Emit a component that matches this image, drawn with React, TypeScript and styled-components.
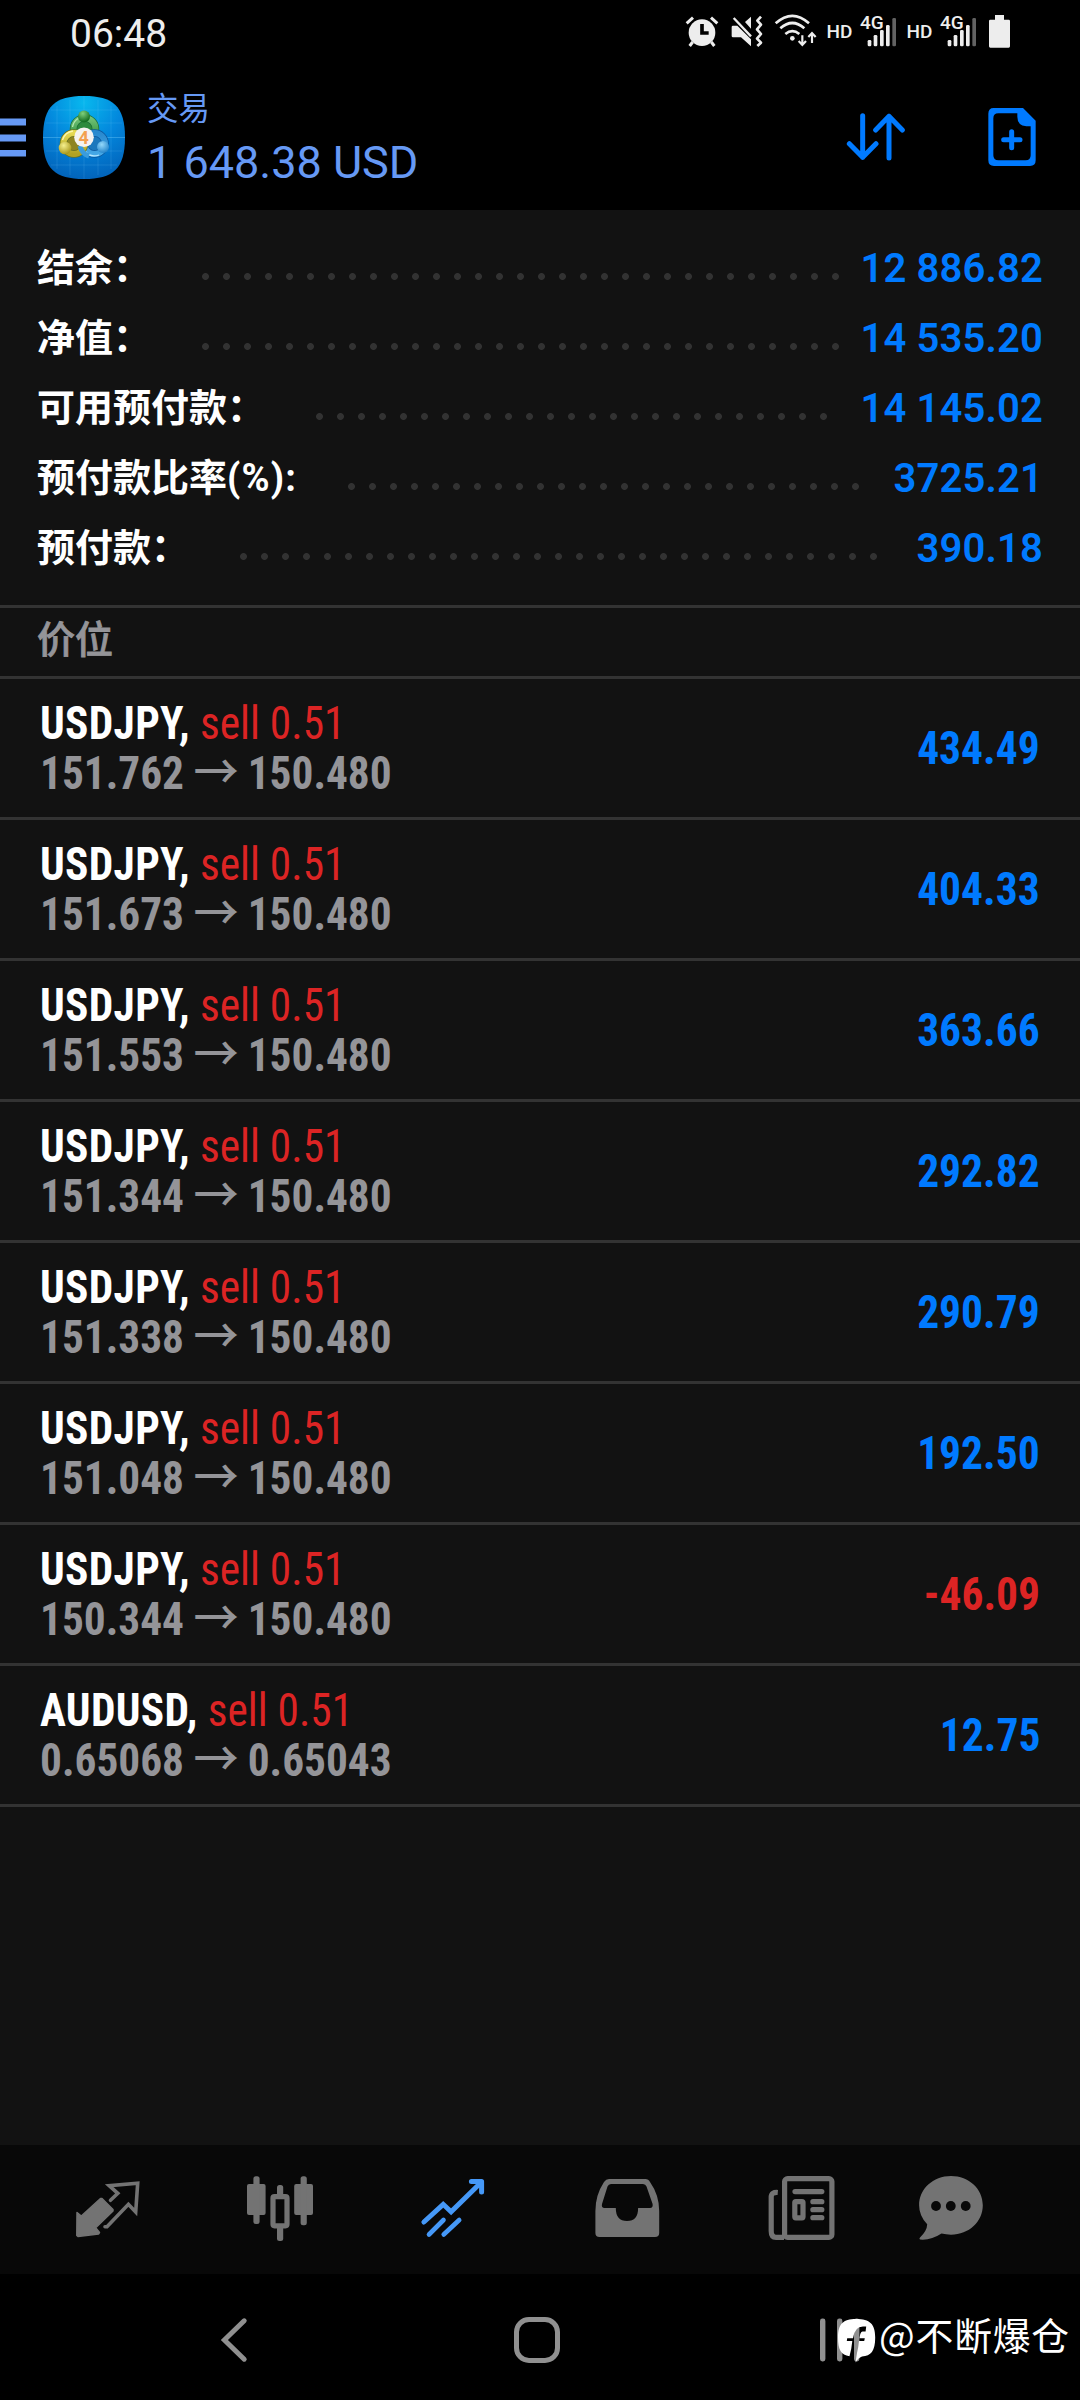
import React from 'react';
import styled, { createGlobalStyle } from 'styled-components';

const BLUE = '#007aff';
const RED = '#dc2424';
const MUTED = '#949498';
const TAB = '#737373';

const GlobalStyle = createGlobalStyle`
  html, body { margin: 0; padding: 0; background: #000; }
  * { box-sizing: border-box; }
  svg { display: block; flex: none; }
`;

const Screen = styled.div`
  position: relative;
  display: flex;
  flex-direction: column;
  width: 1080px;
  height: 2400px;
  overflow: hidden;
  background: #000;
  font-family: Roboto, 'Noto Sans CJK SC', sans-serif;
  white-space: nowrap;
`;

const StatusBar = styled.div`
  display: flex;
  align-items: center;
  height: 64px;
  padding: 0 67px 0 70px;
  color: #ededed;
`;

const Clock = styled.span`
  margin-right: auto;
  padding-top: 4px;
  font-size: 39px;
  line-height: 60px;
`;

const StatusIcons = styled.div`
  display: flex;
  align-items: center;
  gap: 8px;
`;

const HdLabel = styled.span`
  width: 27px;
  font-size: 19px;
  font-weight: 500;
  line-height: 40px;
  text-align: center;
`;

const SignalBox = styled.div`
  position: relative;
  width: 37px;
  height: 40px;
`;

const NetworkLabel = styled.span`
  position: absolute;
  left: -1px;
  top: 0;
  font-size: 19px;
  font-weight: 500;
  line-height: 22px;
`;

const AppBar = styled.header`
  display: flex;
  align-items: center;
  height: 146px;
  padding-right: 44px;
  color: #6699f5;
`;

const LogoWrap = styled.div`
  margin-left: 17px;
`;

const Titles = styled.div`
  display: flex;
  flex-direction: column;
  margin: 0 auto 3px 22px;
`;

const Title = styled.span`
  font-size: 31.5px;
  line-height: 54px;
`;

const Equity = styled.span`
  font-size: 45px;
  line-height: 52px;
`;

const Actions = styled.div`
  display: flex;
  align-items: center;
  gap: 82px;
`;

const Body = styled.main`
  height: 1935px;
  background: #121212;
`;

const Summary = styled.section`
  height: 395px;
  padding: 22px 37px 0;
`;

const SummaryRow = styled.div`
  display: flex;
  align-items: center;
  height: 70px;
`;

const SummaryLabel = styled.span`
  padding-top: 1px;
  color: #fff;
  font-size: 38px;
  font-weight: 700;
  line-height: 66px;
`;

const Unit = styled.span`
  letter-spacing: 1.2px;
`;

const Dots = styled.span<{ $count: number }>`
  width: ${(p) => p.$count * 21}px;
  height: 7px;
  margin: 18px 0 0 44px;
  background: radial-gradient(circle at center, #323232 3px, transparent 3.8px) 0 0 / 21px 7px repeat-x;
`;

const SummaryValue = styled.span`
  margin-left: auto;
  padding-top: 3px;
  color: ${BLUE};
  font-size: 40px;
  font-weight: 650;
  letter-spacing: 0.15px;
  line-height: 66px;
`;

const SectionHeading = styled.h2`
  height: 74px;
  margin: 0;
  padding-left: 37px;
  border: solid #333;
  border-width: 3px 0;
  color: ${MUTED};
  font-size: 38px;
  font-weight: 500;
  line-height: 64px;
  -webkit-text-stroke: 0.8px ${MUTED};
`;

const PositionRow = styled.div`
  display: flex;
  align-items: center;
  justify-content: space-between;
  height: 141px;
  padding: 0 40px;
  border-bottom: 3px solid #333;
  font-family: 'Roboto Condensed', Roboto, sans-serif;
  font-stretch: 75%;
  font-size: 46px;
  line-height: 50px;
`;

const PositionInfo = styled.div`
  display: flex;
  flex-direction: column;
  transform: scaleX(0.942);
  transform-origin: left center;
`;

const Symbol = styled.span`
  color: #fff;
  font-weight: 700;
  letter-spacing: 0.35px;
`;

const Side = styled.span`
  color: ${RED};
  font-weight: 400;
`;

const Prices = styled.div`
  display: flex;
  height: 50px;
  color: ${MUTED};
  font-weight: 700;
`;

const Arrow = styled.span`
  margin: 0 9.6px 0 10px;
  font-family: 'Noto Sans CJK SC', sans-serif;
  font-size: 48px;
  font-weight: 500;
  line-height: 41px;
`;

const Profit = styled.span<{ $loss: boolean }>`
  color: ${(p) => (p.$loss ? RED : BLUE)};
  font-weight: 700;
  transform: scaleX(0.945);
  transform-origin: right center;
`;

const TabBar = styled.nav`
  display: grid;
  grid-template-columns: 172px 172px 174px 174px 176px 122px;
  align-items: center;
  justify-items: center;
  height: 129px;
  padding: 0 0 1px 22px;
  background: #080808;
`;

const SystemNav = styled.div`
  display: flex;
  align-items: center;
  height: 126px;
  padding: 5px 0 0 216px;
`;

const HomeKey = styled.div`
  width: 46px;
  height: 46px;
  margin: 0 260px 0 264px;
  border: 5px solid #909090;
  border-radius: 15px;
`;

const Watermark = styled.div`
  position: absolute;
  left: 837px;
  top: 2309px;
  display: flex;
  align-items: center;
  height: 60px;
  color: #fff;
  font-family: 'Noto Sans CJK SC', sans-serif;
  font-size: 37.8px;
  line-height: 54px;
`;

const Handle = styled.span`
  margin: -10px 0 0 3px;
  letter-spacing: 0.8px;
`;

const AlarmIcon = () => (
  <svg width="39" height="40" viewBox="69 36 117 120" fill="none">
    <circle cx="126" cy="98" r="40" fill="#ededed" />
    <path d="M80 70L99 53M172 70L153 53" stroke="#ededed" strokeWidth="9" />
    <path d="M98 126L89 138M154 126L163 138" stroke="#ededed" strokeWidth="9" />
    <path d="M126 72V99H146" stroke="#000" strokeWidth="11" />
  </svg>
);

const VibrateIcon = () => (
  <svg width="36" height="40" viewBox="210 36 108 120" fill="none">
    <path d="M219 77H232L273 118V139L243 112H219Q215 112 215 108V81Q215 77 219 77Z" fill="#ededed" />
    <path d="M255 66L273 50V86Z" fill="#ededed" />
    <path d="M221 54L273 109" stroke="#ededed" strokeWidth="7" />
    <path d="M303 50L292 62L303 74L291 88L303 102L291 116L303 128L292 138" stroke="#ededed" strokeWidth="8" strokeLinejoin="round" />
  </svg>
);

const WifiIcon = () => (
  <svg width="44" height="40" viewBox="342 36 132 120" fill="none" stroke="#ededed">
    <path d="M347 70Q397 25 447 70M361 85Q397 53 433 85M376 102Q397 85 418 102" strokeWidth="8" />
    <circle cx="397" cy="115" r="7" fill="#ededed" stroke="none" />
    <path d="M427 106V134M416 123L427 135L438 123M456 129V99M445 111L456 99L467 111" strokeWidth="6.5" />
  </svg>
);

const Signal = () => (
  <SignalBox>
    <svg width="37" height="40" viewBox="603 36 111 120">
      <g fill="#ededed">
        <rect x="623" y="120" width="11" height="19" rx="4" />
        <rect x="641" y="105" width="11" height="34" rx="4" />
        <rect x="660" y="90" width="11" height="49" rx="4" />
        <rect x="678" y="75" width="11" height="64" rx="4" />
      </g>
      <rect x="697" y="54" width="11" height="85" rx="4" fill="#626262" />
    </svg>
    <NetworkLabel>4G</NetworkLabel>
  </SignalBox>
);

const BatteryIcon = () => (
  <svg width="27" height="40" viewBox="978 36 81 120">
    <path d="M1005 45H1032V59H1046Q1050 59 1050 63V139Q1050 143 1046 143H991Q987 143 987 139V63Q987 59 991 59H1005Z" fill="#ededed" />
  </svg>
);

const MenuIcon = () => (
  <svg width="26" height="40" viewBox="0 0 26 40" fill="#6699f5">
    <rect x="0" y="1.5" width="26" height="7" />
    <rect x="0" y="17.5" width="26" height="7" />
    <rect x="0" y="33" width="26" height="6.5" />
  </svg>
);

const AppLogo = () => (
  <svg width="82" height="83" viewBox="0 0 82 83" fill="none">
    <defs>
      <radialGradient id="bg" cx="0.5" cy="0.08" r="0.95">
        <stop offset="0" stopColor="#08b8ee" />
        <stop offset="0.5" stopColor="#0386dc" />
        <stop offset="1" stopColor="#0262b9" />
      </radialGradient>
      <linearGradient id="green" x1="0" y1="0" x2="0" y2="1">
        <stop offset="0" stopColor="#72c276" />
        <stop offset="1" stopColor="#268a35" />
      </linearGradient>
      <linearGradient id="gold" x1="0" y1="0" x2="0" y2="1">
        <stop offset="0" stopColor="#e6da55" />
        <stop offset="1" stopColor="#b0a222" />
      </linearGradient>
      <linearGradient id="sky" x1="0" y1="0" x2="0" y2="1">
        <stop offset="0" stopColor="#2989cf" />
        <stop offset="1" stopColor="#45a8e6" />
      </linearGradient>
      <radialGradient id="greenBall" cx="0.4" cy="0.25" r="0.7">
        <stop offset="0" stopColor="#7fd07c" />
        <stop offset="1" stopColor="#146e22" />
      </radialGradient>
      <radialGradient id="goldBall" cx="0.4" cy="0.3" r="0.7">
        <stop offset="0" stopColor="#f6f08e" />
        <stop offset="1" stopColor="#a8981c" />
      </radialGradient>
      <radialGradient id="skyBall" cx="0.4" cy="0.3" r="0.7">
        <stop offset="0" stopColor="#94d8fa" />
        <stop offset="1" stopColor="#2687cc" />
      </radialGradient>
    </defs>
    <path d="M41 0C70 0 82 10 82 41.5S70 83 41 83S0 73 0 41.5S12 0 41 0Z" fill="url(#bg)" />
    <path d="M14 10V73M27 4V79M41 0V83M55 4V79M68 10V73M8 14H74M3 27H79M3 55H79M8 69H74" stroke="#8edcff" strokeOpacity="0.14" />
    <path d="M0 41.5H82" stroke="#7fd4ff" strokeOpacity="0.35" />
    <circle cx="41.5" cy="33" r="11" fill="#2c8a3c" stroke="#1c6d38" strokeWidth="7.5" />
    <circle cx="41.5" cy="33" r="11" stroke="url(#green)" strokeWidth="6" />
    <path d="M29.5 31A12 12 0 0 1 36 22" stroke="#b4e8b0" strokeWidth="1.3" />
    <circle cx="51.5" cy="47.5" r="10.5" fill="#1b78bd" stroke="#0b579e" strokeWidth="7.5" />
    <circle cx="51.5" cy="47.5" r="10.5" stroke="url(#sky)" strokeWidth="6" />
    <path d="M42 55Q47 62 56 59" stroke="#b8e8ff" strokeWidth="1.3" />
    <circle cx="31" cy="47.5" r="10.5" fill="#8e8420" stroke="#66701f" strokeWidth="7.5" />
    <circle cx="31" cy="47.5" r="10.5" stroke="url(#gold)" strokeWidth="6" />
    <path d="M19.5 44Q22 36 30 35" stroke="#fbf7b0" strokeWidth="1.3" />
    <path d="M37 50Q39 58 46 60" stroke="#3a9cdd" strokeWidth="5" />
    <circle cx="41" cy="20.5" r="6" fill="url(#greenBall)" />
    <circle cx="22" cy="52" r="6.3" fill="url(#goldBall)" />
    <circle cx="60" cy="51" r="6" fill="url(#skyBall)" />
    <circle cx="41" cy="41.2" r="9.8" fill="#f4f2f0" />
    <text x="40.6" y="47.6" textAnchor="middle" fontFamily="Roboto, sans-serif" fontSize="18" fontWeight="700" fill="#f3a050">4</text>
  </svg>
);

const SortIcon = () => (
  <svg width="60" height="60" viewBox="557 320 180 180" fill="none" stroke={BLUE} strokeWidth="15" strokeLinecap="round" strokeLinejoin="round">
    <path d="M607 346V471M567 430L607 471L647 430M686 473V348M646 389L686 348L726 389" />
  </svg>
);

const NewOrderIcon = () => (
  <svg width="48" height="60" viewBox="983 320 144 180">
    <path
      fillRule="evenodd"
      fill={BLUE}
      d="M1000 323H1088L1126 361V480Q1126 497 1109 497H1001Q984 497 984 480V340Q984 323 1000 323ZM1014 339Q999 339 999 354V465Q999 480 1014 480H1096Q1111 480 1111 465V378H1098Q1071 375 1071 349V339Z"
    />
    <path d="M1030 418H1079M1054 394V442" stroke={BLUE} strokeWidth="15" strokeLinecap="round" />
  </svg>
);

const TabIcon = ({ children }: { children: React.ReactNode }) => (
  <svg width="80" height="80" viewBox="0 0 80 80" fill="none">
    {children}
  </svg>
);

const QuotesIcon = () => (
  <TabIcon>
    <path d="M9 43.5L13.3 47L32.5 29.5L34 29.5L45 40.5V42L27.7 58.7L31.5 63.5L30.5 65L10 67.5L8.8 66.5Z" fill={TAB} stroke={TAB} strokeLinejoin="round" strokeWidth="1.5" />
    <path d="M42.5 31.3L49.8 24.3L41.2 16.7L69.7 14.2L67.7 43L60.4 35.3L39 57.7H37" stroke={TAB} strokeWidth="3.6" strokeLinecap="round" />
  </TabIcon>
);

const ChartsIcon = () => (
  <TabIcon>
    <g fill={TAB}>
      <rect x="7" y="15" width="18.6" height="31" rx="2" />
      <rect x="13.4" y="7.3" width="6.2" height="47.7" rx="2.5" />
      <rect x="54.2" y="15" width="18.8" height="31" rx="2" />
      <rect x="60.6" y="7.3" width="6.2" height="49" rx="2.5" />
      <rect x="37" y="16" width="6.2" height="11" rx="2.5" />
      <rect x="37" y="57" width="6.2" height="15" rx="2.5" />
    </g>
    <rect x="33" y="27.6" width="14" height="29.2" rx="1.5" stroke={TAB} strokeWidth="5.2" />
  </TabIcon>
);

const TradeIcon = () => (
  <TabIcon>
    <g stroke="#4598f7" strokeWidth="5" strokeLinecap="round">
      <path d="M10.9 53L30.2 35.3L38.1 42.7L68 13.5" />
      <path d="M58.4 12.6H68.6V23" strokeLinejoin="round" />
      <path d="M16 65.5L30.5 51M30.7 65.5L46.2 51" strokeWidth="4.6" />
    </g>
    <path d="M60 11H70V22Z" fill="#4598f7" />
  </TabIcon>
);

const HistoryIcon = () => (
  <TabIcon>
    <path
      fillRule="evenodd"
      fill={TAB}
      d="M22 10H58.5Q61.5 10 63 13Q72.2 26 72.2 42V64Q72.2 68 68 68H12.5Q8.4 68 8.4 64V42Q8.4 26 17 13Q19 10 22 10ZM24 15Q21.5 15 20.5 17.5L15 35Q14.2 39 17.5 39H28.8Q28.8 52 40 52T51.1 39H63Q66.2 39 65.6 35L59.5 17.5Q58.5 15 56 15Z"
    />
  </TabIcon>
);

const NewsIcon = () => (
  <TabIcon>
    <rect x="22.6" y="9.6" width="47.3" height="58.8" rx="3" stroke={TAB} strokeWidth="5.2" />
    <path d="M15.8 23.5Q9.2 23 9.2 28V62Q9.2 68.4 14 68.4H22" stroke={TAB} strokeWidth="5.2" />
    <g fill={TAB}>
      <rect x="30.4" y="20" width="32" height="5.2" rx="2.6" />
      <rect x="48.3" y="30" width="14.1" height="5.3" rx="2.6" />
      <rect x="48.3" y="38" width="14.1" height="5.3" rx="2.6" />
      <rect x="48.3" y="46" width="14.1" height="5.3" rx="2.6" />
    </g>
    <rect x="32.8" y="32.6" width="8.2" height="16.2" rx="1" stroke={TAB} strokeWidth="5.2" />
  </TabIcon>
);

const ChatIcon = () => (
  <TabIcon>
    <path
      fillRule="evenodd"
      fill={TAB}
      d="M40 7C58 7 71.8 20 71.8 36.3S58 65.7 40 65.7Q35 65.7 30.5 64.6Q20 71.5 9 70.5Q7.8 70 9 68.5Q16 62 16.2 55.3Q8.1 47 8.1 36.3C8.1 20 22 7 40 7Z"
    />
    <g fill="#080808">
      <circle cx="25" cy="37" r="4.9" />
      <circle cx="39.8" cy="37" r="4.9" />
      <circle cx="54.7" cy="37" r="4.9" />
    </g>
  </TabIcon>
);

const BackKey = () => (
  <svg width="34" height="46" viewBox="0 0 34 46" fill="none">
    <path d="M28.2 3.8L8.4 23L28.2 42.2" stroke="#909090" strokeWidth="5" strokeLinecap="round" />
  </svg>
);

const RecentsKey = () => (
  <svg width="40" height="46" viewBox="0 0 40 46" fill="#909090">
    <rect x="0" y="1.5" width="5.4" height="43" rx="2.4" />
    <rect x="17" y="1.5" width="5.4" height="43" rx="2.4" />
    <rect x="34" y="1.5" width="5.4" height="43" rx="2.4" />
  </svg>
);

const WatermarkLogo = () => (
  <svg width="39" height="48" viewBox="0 0 39 48">
    <path
      fillRule="evenodd"
      fill="#fff"
      d="M19 4C33 4 38.2 9 38.2 22.5C38.2 36 34 41 25 41.5Q21 43 18.5 47.5L20 38Q21.5 32 22 26H27.2L27.8 23.3H22.5Q23 17 25.5 16.6L28.6 16.5L29.2 11.5H26Q17.5 11.5 16 23.3H10.2L9.8 26H15.3Q14.6 34 12.5 41.2C4 40 1 35 1 22.5C1 9 6 4 19 4Z"
    />
  </svg>
);

const summary = [
  { label: '结余：', dots: 31, value: '12 886.82' },
  { label: '净值：', dots: 31, value: '14 535.20' },
  { label: '可用预付款：', dots: 25, value: '14 145.02' },
  { label: '预付款比率', unit: '(%):', dots: 25, value: '3725.21' },
  { label: '预付款：', dots: 31, value: '390.18' },
];

const positions = [
  { symbol: 'USDJPY', open: '151.762', current: '150.480', profit: '434.49' },
  { symbol: 'USDJPY', open: '151.673', current: '150.480', profit: '404.33' },
  { symbol: 'USDJPY', open: '151.553', current: '150.480', profit: '363.66' },
  { symbol: 'USDJPY', open: '151.344', current: '150.480', profit: '292.82' },
  { symbol: 'USDJPY', open: '151.338', current: '150.480', profit: '290.79' },
  { symbol: 'USDJPY', open: '151.048', current: '150.480', profit: '192.50' },
  { symbol: 'USDJPY', open: '150.344', current: '150.480', profit: '-46.09' },
  { symbol: 'AUDUSD', open: '0.65068', current: '0.65043', profit: '12.75' },
];

export default function App() {
  return (
    <>
      <GlobalStyle />
      <Screen>
        <StatusBar>
          <Clock>06:48</Clock>
          <StatusIcons>
            <AlarmIcon />
            <VibrateIcon />
            <WifiIcon />
            <HdLabel>HD</HdLabel>
            <Signal />
            <HdLabel>HD</HdLabel>
            <Signal />
            <BatteryIcon />
          </StatusIcons>
        </StatusBar>
        <AppBar>
          <MenuIcon />
          <LogoWrap>
            <AppLogo />
          </LogoWrap>
          <Titles>
            <Title>交易</Title>
            <Equity>1 648.38 USD</Equity>
          </Titles>
          <Actions>
            <SortIcon />
            <NewOrderIcon />
          </Actions>
        </AppBar>
        <Body>
          <Summary>
            {summary.map((row) => (
              <SummaryRow key={row.label}>
                <SummaryLabel>
                  {row.label}
                  {row.unit && <Unit>{row.unit}</Unit>}
                </SummaryLabel>
                <Dots $count={row.dots} />
                <SummaryValue>{row.value}</SummaryValue>
              </SummaryRow>
            ))}
          </Summary>
          <SectionHeading>价位</SectionHeading>
          {positions.map((p) => (
            <PositionRow key={p.open}>
              <PositionInfo>
                <div>
                  <Symbol>{p.symbol},</Symbol> <Side>sell 0.51</Side>
                </div>
                <Prices>
                  <span>{p.open}</span>
                  <Arrow>→</Arrow>
                  <span>{p.current}</span>
                </Prices>
              </PositionInfo>
              <Profit $loss={p.profit.startsWith('-')}>{p.profit}</Profit>
            </PositionRow>
          ))}
        </Body>
        <TabBar>
          <QuotesIcon />
          <ChartsIcon />
          <TradeIcon />
          <HistoryIcon />
          <NewsIcon />
          <ChatIcon />
        </TabBar>
        <SystemNav>
          <BackKey />
          <HomeKey />
          <RecentsKey />
        </SystemNav>
        <Watermark>
          <WatermarkLogo />
          <Handle>@不断爆仓</Handle>
        </Watermark>
      </Screen>
    </>
  );
}
